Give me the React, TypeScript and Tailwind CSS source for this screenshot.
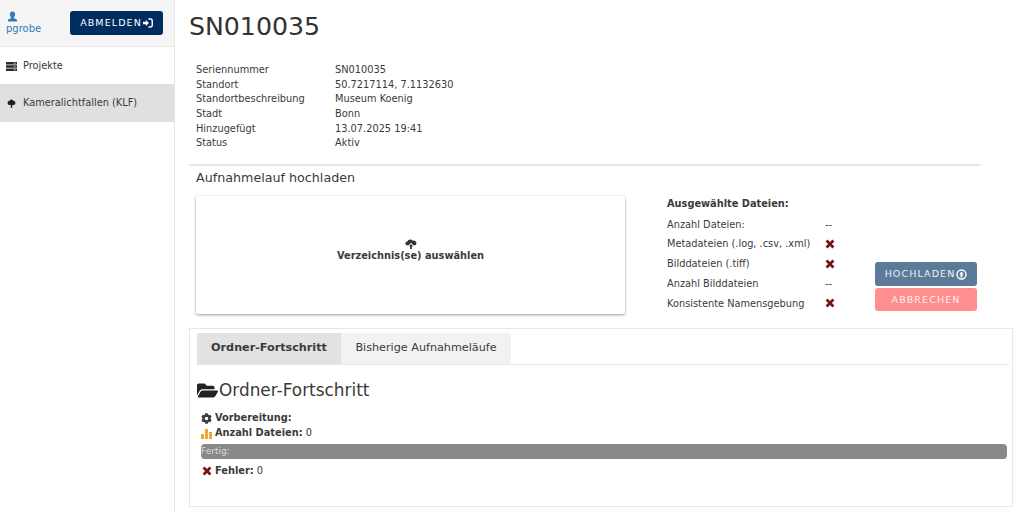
import { FaCog, FaFolderOpen } from "react-icons/fa";

const details = [
  ["Seriennummer", "SN010035"],
  ["Standort", "50.7217114, 7.1132630"],
  ["Standortbeschreibung", "Museum Koenig"],
  ["Stadt", "Bonn"],
  ["Hinzugefügt", "13.07.2025 19:41"],
  ["Status", "Aktiv"],
];

const fileChecks = [
  { label: "Anzahl Dateien:", value: "--" },
  { label: "Metadateien (.log, .csv, .xml)", failed: true },
  { label: "Bilddateien (.tiff)", failed: true },
  { label: "Anzahl Bilddateien", value: "--" },
  { label: "Konsistente Namensgebung", failed: true },
];

const UserIcon = () => (
  <svg viewBox="0 0 12 12" className="ml-[1px] h-[11px] w-[11px]" fill="#337ab7">
    <path d="M6 .5c1.900 0 2.900 1.300 2.900 3S7.900 6.700 7.500 7v.8c1.800.6 3.500 1.200 3.500 2.200v1.500H1V10c0-1 1.700-1.600 3.500-2.200V7C4.100 6.700 3.100 5.200 3.100 3.500S4.100.5 6 .5z" />
  </svg>
);

const ServerIcon = () => (
  <svg viewBox="0 0 12 12" className="h-[11px] w-[11px]" fill="#2b2b2b">
    <path d="M0 1h12v2.800H0zM0 4.600h12v2.800H0zM0 8.200h12V11H0z" />
    <path d="M8.500 2h2v.8h-2zM8.500 5.600h2v.8h-2zM8.500 9.200h2v.8h-2z" fill="#fff" />
  </svg>
);

const TreeIcon = () => (
  <svg viewBox="0 0 12 12" className="mx-[1px] h-[11px] w-[9px]" fill="#222">
    <path d="M6 .5c1.500 0 2.400 1 2.700 1.800 1.400.3 2.600 1.500 2.600 3 0 1.700-1.500 2.800-3.300 2.800H7v3.400H5V8.100H4C2.200 8.100.7 7 .7 5.300c0-1.500 1.200-2.700 2.600-3C3.600 1.500 4.500.5 6 .5z" />
  </svg>
);

const RemoveIcon = () => (
  <svg viewBox="0 0 12 12" className="-mt-[2px] h-[10px] w-[10px]" fill="#7a1414">
    <path d="M3 .7 6 3.700 9 .7 11.300 3 8.300 6l3 3L9 11.300l-3-3-3 3L.7 9l3-3-3-3z" />
  </svg>
);

const LoginIcon = () => (
  <svg viewBox="0 0 12 12" className="h-[10px] w-[10px]" fill="none">
    <path d="M0 4.600h3.400V2.400L7.200 6 3.400 9.600V7.400H0z" fill="#fff" />
    <path d="M6.500 1.200h2.600a2 2 0 0 1 2 2v5.600a2 2 0 0 1-2 2H6.500" stroke="#fff" strokeWidth="1.700" />
  </svg>
);

const CloudUpload = () => (
  <svg viewBox="0 0 12 12" className="h-[12px] w-[12px]" fill="#333">
    <path d="M1 6.900C-.2 5.600.5 3.600 2.300 3.500 3 1.200 6.300.6 7.700 2.700c2-.5 4 .9 3.700 3-.1.7-.5 1.200-1 1.600H8.300L6 4.800 3.700 7.300H2.200c-.5 0-.9-.1-1.200-.4z" />
    <path d="M6 6 8 8.300H6.900V11H5.100V8.300H4z" />
  </svg>
);

const UploadCircle = () => (
  <svg viewBox="0 0 12 12" className="h-[11px] w-[11px]" fill="none">
    <circle cx="6" cy="6" r="4.900" stroke="#fff" strokeWidth="1.500" />
    <path d="M6 2.800 8.500 5.700H7.100V9H4.900V5.700H3.500z" fill="#fff" />
  </svg>
);

const BarChart = () => (
  <svg viewBox="0 0 11 11" className="h-[11px] w-[11px]" fill="#eaa92f">
    <rect x="0" y="6" width="3" height="5" />
    <rect x="4" y="1" width="3" height="10" />
    <rect x="8" y="4" width="3" height="7" />
  </svg>
);

export default function App() {
  return (
    <div className="flex h-[513px] w-[1024px] overflow-hidden bg-white font-['DejaVu_Sans',sans-serif] text-[9.8px] text-[#3a3a3a]">
      <aside className="w-[175px] shrink-0 border-r border-[#e7e7e7]">
        <div className="flex h-[47px] items-center justify-between border-b border-[#e7e7e7] bg-[#f5f5f5] pl-[6px] pr-[11px]">
          <div className="flex flex-col text-[#337ab7]">
            <UserIcon />
            <span className="text-[10px] leading-[13px]">pgrobe</span>
          </div>
          <div className="flex h-[24px] w-[93px] items-center justify-center gap-[1px] rounded-[3px] bg-[#002d5f] text-[9.5px] tracking-[1.1px] text-white">
            ABMELDEN
            <LoginIcon />
          </div>
        </div>
        <div className="flex h-[37px] items-center gap-[6px] pl-[6px] pt-[1px]">
          <ServerIcon />
          <span>Projekte</span>
        </div>
        <div className="flex h-[38px] items-center gap-[6px] bg-[#e0e0e0] pl-[6px]">
          <TreeIcon />
          <span>Kameralichtfallen (KLF)</span>
        </div>
      </aside>

      <main className="flex min-w-0 flex-1 flex-col pl-[14px] pr-[11px]">
        <h1 className="mt-[12px] text-[25.2px] leading-[30px] text-[#333]">SN010035</h1>

        <div className="mt-[21px] mb-[13px] flex flex-col pl-[7px]">
          {details.map(([label, value]) => (
            <div key={label} className="flex h-[14.7px] items-center leading-[14.7px]">
              <span className="w-[139px] shrink-0">{label}</span>
              <span>{value}</span>
            </div>
          ))}
        </div>

        <div className="w-[791px] border-t-2 border-[#e4e7ea]" />
        <h2 className="mt-[3px] pl-[7px] text-[12.7px] leading-[18px]">Aufnahmelauf hochladen</h2>

        <div className="mt-[9px] flex pl-[7px]">
          <div className="flex h-[118px] w-[429px] shrink-0 flex-col items-center justify-center rounded-[2px] bg-white pb-[11px] shadow-[0_1px_3px_rgba(0,0,0,0.4)]">
            <CloudUpload />
            <span className="text-[9.8px] leading-[12px] font-bold">Verzeichnis(se) auswählen</span>
          </div>

          <div className="ml-[42px] w-[208px] shrink-0 pt-[1px]">
            <div className="leading-[14px] font-bold">Ausgewählte Dateien:</div>
            <div className="mt-[4px] flex flex-col">
              {fileChecks.map((row) => (
                <div key={row.label} className="flex h-[19.8px] items-center">
                  <span className="w-[158px] shrink-0">{row.label}</span>
                  {row.failed ? <RemoveIcon /> : <span>{row.value}</span>}
                </div>
              ))}
            </div>
          </div>

          <div className="flex w-[102px] shrink-0 flex-col justify-end gap-[2px] pb-[3px]">
            <div className="flex h-[24px] items-center justify-center gap-[1px] rounded-[3px] bg-[#5c7b9b] text-[9.5px] tracking-[1.1px] text-[#f0f0f0]">
              HOCHLADEN
              <UploadCircle />
            </div>
            <div className="flex h-[23px] items-center justify-center rounded-[3px] bg-[#ff8f8f] text-[9.5px] tracking-[1.1px] text-[#ffeeee]">
              ABBRECHEN
            </div>
          </div>
        </div>

        <section className="mt-[14px] flex h-[179px] flex-col border border-[#e8e8e8] pl-[7px] pr-[5px] pt-[4px]">
          <div className="-mr-[2px] flex h-[32px] shrink-0 border-b border-[#e4e4e4]">
            <div className="flex w-[144px] items-center justify-center bg-[#e2e2e2] text-[11.2px] font-bold">
              Ordner-Fortschritt
            </div>
            <div className="flex w-[170px] items-center justify-center bg-[#f2f2f2] text-[11.2px]">
              Bisherige Aufnahmeläufe
            </div>
          </div>

          <div className="mt-[14px] flex items-center gap-[1px] text-[16.9px] leading-[22px]">
            <FaFolderOpen className="h-[19px] w-[21px] text-[#222]" />
            <span>Ordner-Fortschritt</span>
          </div>

          <div className="mt-[10px] flex h-[15px] items-center gap-[3px] pl-[4px]">
            <FaCog className="h-[11px] w-[11px]" />
            <b>Vorbereitung:</b>
          </div>
          <div className="flex h-[15px] items-center gap-[3px] pl-[4px]">
            <BarChart />
            <span>
              <b>Anzahl Dateien:</b> 0
            </span>
          </div>
          <div className="mt-[3px] ml-[4px] flex h-[15px] items-center rounded-[4px] bg-[#888] text-[9px] text-[#ddd]">
            Fertig:
          </div>
          <div className="mt-[5px] flex h-[15px] items-center gap-[3px] pl-[5px]">
            <RemoveIcon />
            <span>
              <b>Fehler:</b> 0
            </span>
          </div>
        </section>
      </main>
    </div>
  );
}
